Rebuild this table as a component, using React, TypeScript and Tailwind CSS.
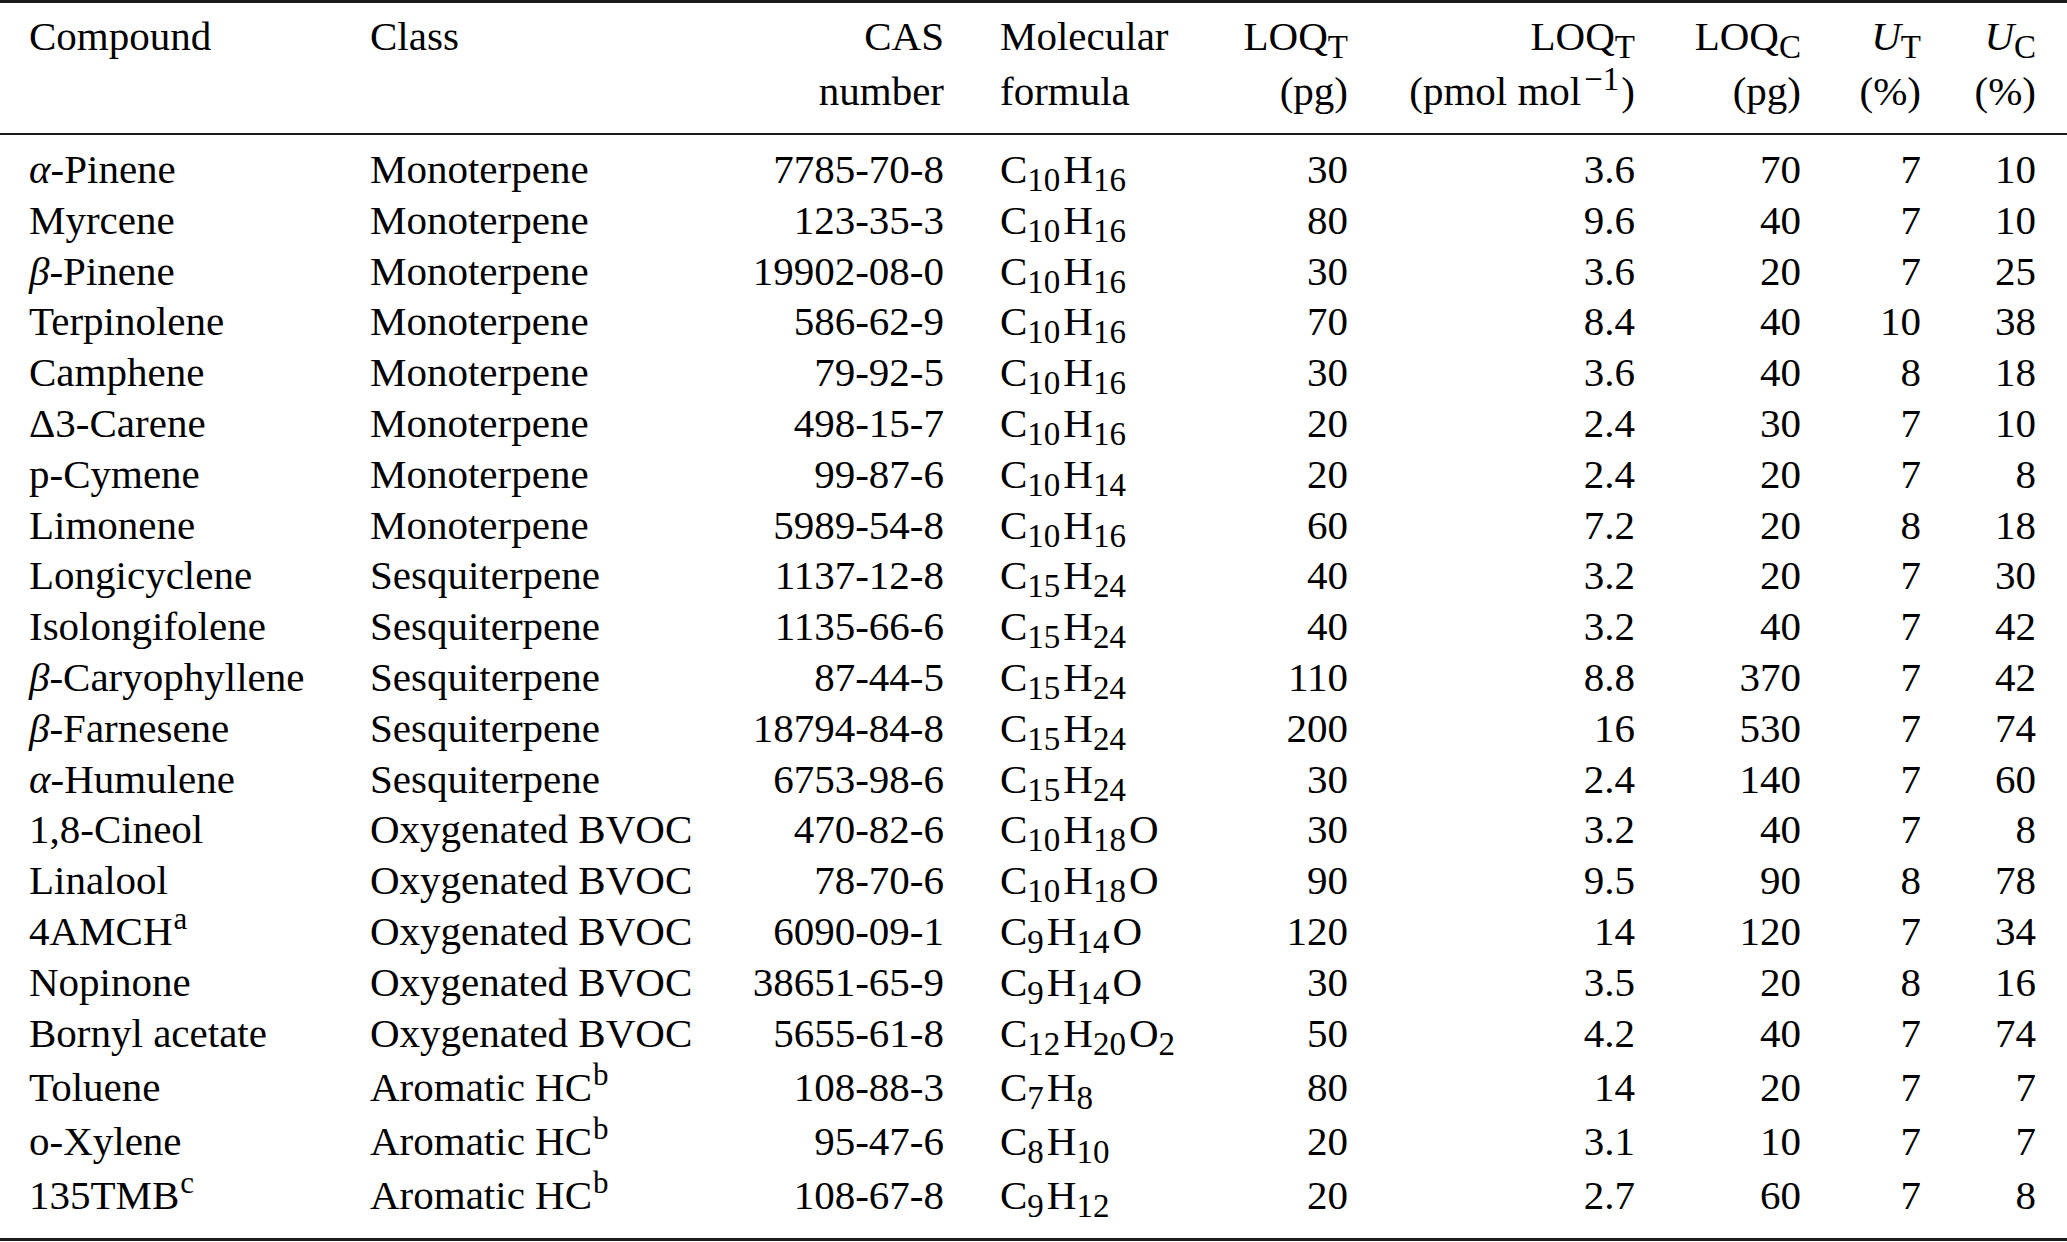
import type { ReactNode } from 'react';

type Part = [string, string?];

type Row = {
  name: ReactNode;
  cls: ReactNode;
  cas: string;
  formula: Part[];
  loqT: string;
  loqTmol: string;
  loqC: string;
  uT: string;
  uC: string;
  tall?: boolean;
};

function Sub({ children, gap = false }: { children: ReactNode; gap?: boolean }) {
  return (
    <span className={`relative top-[8px] text-[33px] leading-[0] ${gap ? 'mr-[3px]' : ''}`}>{children}</span>
  );
}

function Sup({ children }: { children: ReactNode }) {
  return <span className="relative top-[-16px] text-[31px] leading-[0] ml-[1px]">{children}</span>;
}

const HC = (
  <>
    Aromatic HC<Sup>b</Sup>
  </>
);

const rows: Row[] = [
  { name: <><i>α</i>-Pinene</>, cls: 'Monoterpene', cas: '7785-70-8', formula: [['C', '10'], ['H', '16']], loqT: '30', loqTmol: '3.6', loqC: '70', uT: '7', uC: '10' },
  { name: 'Myrcene', cls: 'Monoterpene', cas: '123-35-3', formula: [['C', '10'], ['H', '16']], loqT: '80', loqTmol: '9.6', loqC: '40', uT: '7', uC: '10' },
  { name: <><i>β</i>-Pinene</>, cls: 'Monoterpene', cas: '19902-08-0', formula: [['C', '10'], ['H', '16']], loqT: '30', loqTmol: '3.6', loqC: '20', uT: '7', uC: '25' },
  { name: 'Terpinolene', cls: 'Monoterpene', cas: '586-62-9', formula: [['C', '10'], ['H', '16']], loqT: '70', loqTmol: '8.4', loqC: '40', uT: '10', uC: '38' },
  { name: 'Camphene', cls: 'Monoterpene', cas: '79-92-5', formula: [['C', '10'], ['H', '16']], loqT: '30', loqTmol: '3.6', loqC: '40', uT: '8', uC: '18' },
  { name: 'Δ3-Carene', cls: 'Monoterpene', cas: '498-15-7', formula: [['C', '10'], ['H', '16']], loqT: '20', loqTmol: '2.4', loqC: '30', uT: '7', uC: '10' },
  { name: 'p-Cymene', cls: 'Monoterpene', cas: '99-87-6', formula: [['C', '10'], ['H', '14']], loqT: '20', loqTmol: '2.4', loqC: '20', uT: '7', uC: '8' },
  { name: 'Limonene', cls: 'Monoterpene', cas: '5989-54-8', formula: [['C', '10'], ['H', '16']], loqT: '60', loqTmol: '7.2', loqC: '20', uT: '8', uC: '18' },
  { name: 'Longicyclene', cls: 'Sesquiterpene', cas: '1137-12-8', formula: [['C', '15'], ['H', '24']], loqT: '40', loqTmol: '3.2', loqC: '20', uT: '7', uC: '30' },
  { name: 'Isolongifolene', cls: 'Sesquiterpene', cas: '1135-66-6', formula: [['C', '15'], ['H', '24']], loqT: '40', loqTmol: '3.2', loqC: '40', uT: '7', uC: '42' },
  { name: <><i>β</i>-Caryophyllene</>, cls: 'Sesquiterpene', cas: '87-44-5', formula: [['C', '15'], ['H', '24']], loqT: '110', loqTmol: '8.8', loqC: '370', uT: '7', uC: '42' },
  { name: <><i>β</i>-Farnesene</>, cls: 'Sesquiterpene', cas: '18794-84-8', formula: [['C', '15'], ['H', '24']], loqT: '200', loqTmol: '16', loqC: '530', uT: '7', uC: '74' },
  { name: <><i>α</i>-Humulene</>, cls: 'Sesquiterpene', cas: '6753-98-6', formula: [['C', '15'], ['H', '24']], loqT: '30', loqTmol: '2.4', loqC: '140', uT: '7', uC: '60' },
  { name: '1,8-Cineol', cls: 'Oxygenated BVOC', cas: '470-82-6', formula: [['C', '10'], ['H', '18'], ['O']], loqT: '30', loqTmol: '3.2', loqC: '40', uT: '7', uC: '8' },
  { name: 'Linalool', cls: 'Oxygenated BVOC', cas: '78-70-6', formula: [['C', '10'], ['H', '18'], ['O']], loqT: '90', loqTmol: '9.5', loqC: '90', uT: '8', uC: '78' },
  { name: <>4AMCH<Sup>a</Sup></>, cls: 'Oxygenated BVOC', cas: '6090-09-1', formula: [['C', '9'], ['H', '14'], ['O']], loqT: '120', loqTmol: '14', loqC: '120', uT: '7', uC: '34' },
  { name: 'Nopinone', cls: 'Oxygenated BVOC', cas: '38651-65-9', formula: [['C', '9'], ['H', '14'], ['O']], loqT: '30', loqTmol: '3.5', loqC: '20', uT: '8', uC: '16' },
  { name: 'Bornyl acetate', cls: 'Oxygenated BVOC', cas: '5655-61-8', formula: [['C', '12'], ['H', '20'], ['O', '2']], loqT: '50', loqTmol: '4.2', loqC: '40', uT: '7', uC: '74' },
  { name: 'Toluene', cls: HC, cas: '108-88-3', formula: [['C', '7'], ['H', '8']], loqT: '80', loqTmol: '14', loqC: '20', uT: '7', uC: '7', tall: true },
  { name: 'o-Xylene', cls: HC, cas: '95-47-6', formula: [['C', '8'], ['H', '10']], loqT: '20', loqTmol: '3.1', loqC: '10', uT: '7', uC: '7', tall: true },
  { name: <>135TMB<Sup>c</Sup></>, cls: HC, cas: '108-67-8', formula: [['C', '9'], ['H', '12']], loqT: '20', loqTmol: '2.7', loqC: '60', uT: '7', uC: '8', tall: true },
];

const cols = 'grid grid-cols-[341px_330px_244px_256px_148px_287px_166px_120px_115px] pl-[29px]';

function Formula({ parts }: { parts: Part[] }) {
  return (
    <>
      {parts.map(([el, n], i) => (
        <span key={i}>
          {el}
          {n && <Sub gap>{n}</Sub>}
        </span>
      ))}
    </>
  );
}

export default function App() {
  return (
    <div className="w-[2067px] h-[1242px] overflow-hidden bg-white text-black text-[41px] font-['Liberation_Serif','Times_New_Roman',serif]">
      {/* top rule */}
      <div className="h-[3px] bg-[#1c1c1c]" />

      {/* header */}
      <div className={`${cols} pt-[6.4px] pb-[13.6px] leading-[55px] whitespace-nowrap`}>
        <div>Compound</div>
        <div>Class</div>
        <div className="text-right">
          <div>CAS</div>
          <div>number</div>
        </div>
        <div className="pl-[56px]">
          <div>Molecular</div>
          <div>formula</div>
        </div>
        <div className="text-right">
          <div>
            LOQ<Sub>T</Sub>
          </div>
          <div>(pg)</div>
        </div>
        <div className="text-right">
          <div>
            LOQ<Sub>T</Sub>
          </div>
          <div>
            (pmol mol
            <span className="relative top-[-15px] text-[33px] leading-[0] ml-[3px] mr-[2px]">−1</span>)
          </div>
        </div>
        <div className="text-right">
          <div>
            LOQ<Sub>C</Sub>
          </div>
          <div>(pg)</div>
        </div>
        <div className="text-right">
          <div>
            <i>U</i>
            <Sub>T</Sub>
          </div>
          <div>(%)</div>
        </div>
        <div className="text-right">
          <div>
            <i>U</i>
            <Sub>C</Sub>
          </div>
          <div>(%)</div>
        </div>
      </div>

      {/* mid rule */}
      <div className="h-[2px] bg-[#1c1c1c]" />

      {/* body */}
      <div className="pt-[9px] pb-[17.6px]">
        {rows.map((r, i) => (
          <div
            key={i}
            className={`${cols} leading-[50.8px] whitespace-nowrap ${r.tall ? 'h-[54px] pt-[3.2px]' : 'h-[50.8px]'}`}
          >
            <div>{r.name}</div>
            <div>{r.cls}</div>
            <div className="text-right">{r.cas}</div>
            <div className="pl-[56px]">
              <Formula parts={r.formula} />
            </div>
            <div className="text-right">{r.loqT}</div>
            <div className="text-right">{r.loqTmol}</div>
            <div className="text-right">{r.loqC}</div>
            <div className="text-right">{r.uT}</div>
            <div className="text-right">{r.uC}</div>
          </div>
        ))}
      </div>

      {/* bottom rule */}
      <div className="h-[3px] bg-[#1c1c1c]" />
    </div>
  );
}
